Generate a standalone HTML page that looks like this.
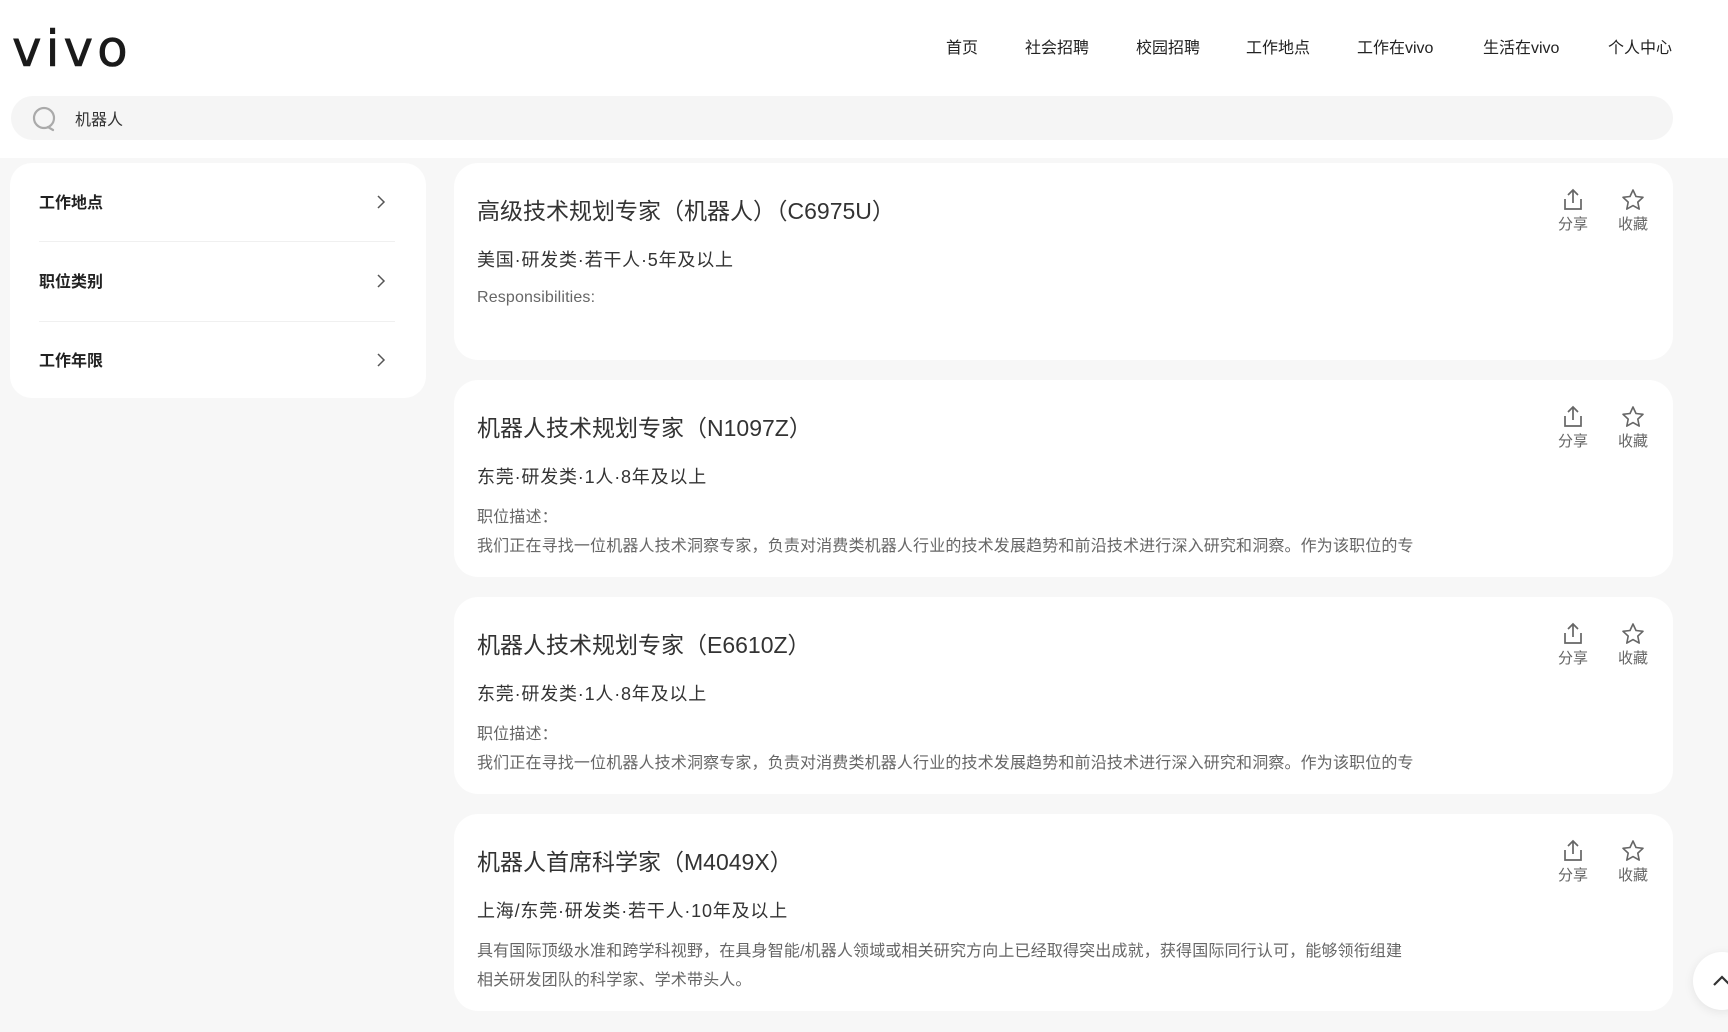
<!DOCTYPE html>
<html><head><meta charset="utf-8"><style>
*{margin:0;padding:0;box-sizing:border-box}
body{width:1728px;height:1032px;overflow:hidden;background:#f7f7f7;font-family:"Liberation Sans","Noto Sans CJK SC",sans-serif;color:#222;position:relative}
.hdr{position:absolute;left:0;top:0;width:1728px;height:158px;background:#fff}
.logo{position:absolute;left:12px;top:20px;font-size:50px;letter-spacing:4px;color:#1a1a1a;font-family:"DejaVu Sans","Liberation Sans",sans-serif;-webkit-text-stroke:0.6px #1a1a1a}
.nav{position:absolute;top:34px;font-size:16px;color:#222}
.search{position:absolute;left:11px;top:96px;width:1662px;height:44px;background:#f5f5f5;border-radius:22px}
.search .t{position:absolute;left:64px;top:10px;font-size:16px;color:#333}
.side{position:absolute;left:10px;top:163px;width:416px;height:235px;background:#fff;border-radius:22px}
.si{position:absolute;left:29px;font-size:16px;font-weight:bold;color:#222}
.hr{position:absolute;left:29px;width:356px;height:1px;background:#f0f0f0}
.chev{position:absolute;left:366px}
.card{position:absolute;left:454px;width:1219px;height:197px;background:#fff;border-radius:24px}
.ti{position:absolute;left:23px;top:29px;font-size:23px;color:#333;white-space:nowrap}
.me{position:absolute;left:23px;top:83px;font-size:18px;letter-spacing:.8px;color:#333;white-space:nowrap}
.d{position:absolute;left:23px;font-size:16px;letter-spacing:.15px;color:#666;white-space:nowrap}
.act{position:absolute;top:25px;width:40px;text-align:center;font-size:15px;color:#666;line-height:20px}
.act svg{display:block;margin:0 auto 3px}
.top{position:absolute;left:1693px;top:952px;width:58px;height:58px;border-radius:50%;background:#fff;box-shadow:0 2px 10px rgba(0,0,0,.08)}
</style></head><body>
<div class="hdr">
<div class="logo">vivo</div>
<div class="nav" style="left:946px">首页</div>
<div class="nav" style="left:1025px">社会招聘</div>
<div class="nav" style="left:1136px">校园招聘</div>
<div class="nav" style="left:1246px">工作地点</div>
<div class="nav" style="left:1357px">工作在vivo</div>
<div class="nav" style="left:1483px">生活在vivo</div>
<div class="nav" style="left:1608px">个人中心</div>
<div class="search">
<svg style="position:absolute;left:21px;top:10px" width="26" height="26" viewBox="0 0 26 26"><circle cx="12" cy="12" r="10" fill="none" stroke="#aaa" stroke-width="2.2"/><path d="M16 21 L21 24" stroke="#aaa" stroke-width="2.2" stroke-linecap="round"/></svg>
<div class="t">机器人</div></div>
</div>
<div class="side">
<div class="si" style="top:26px">工作地点</div>
<div class="hr" style="top:78px"></div>
<div class="si" style="top:105px">职位类别</div>
<div class="hr" style="top:158px"></div>
<div class="si" style="top:184px">工作年限</div>
<svg class="chev" style="top:31px" width="10" height="16" viewBox="0 0 10 16"><path d="M2 2 L8 8 L2 14" fill="none" stroke="#555" stroke-width="1.5"/></svg>
<svg class="chev" style="top:110px" width="10" height="16" viewBox="0 0 10 16"><path d="M2 2 L8 8 L2 14" fill="none" stroke="#555" stroke-width="1.5"/></svg>
<svg class="chev" style="top:189px" width="10" height="16" viewBox="0 0 10 16"><path d="M2 2 L8 8 L2 14" fill="none" stroke="#555" stroke-width="1.5"/></svg>
</div>

<div class="card" style="top:163px">
<div class="ti">高级技术规划专家（机器人）（C6975U）</div>
<div class="me">美国·研发类·若干人·5年及以上</div>
<div class="d" style="top:126px">Responsibilities:</div>
<div class="act" style="left:1099px"><svg width="24" height="24" viewBox="0 0 24 24"><path d="M12 15V2M7 7l5-5 5 5M4 11v10h16V11" fill="none" stroke="#666" stroke-width="1.7"/></svg>分享</div>
<div class="act" style="left:1159px"><svg width="24" height="24" viewBox="0 0 24 24"><path d="M12 2l3 6.5 7 .8-5.2 4.8 1.4 7L12 17.6 5.8 21.1l1.4-7L2 9.3l7-.8z" fill="none" stroke="#666" stroke-width="1.6" stroke-linejoin="round"/></svg>收藏</div>
</div>
<div class="card" style="top:380px">
<div class="ti">机器人技术规划专家（N1097Z）</div>
<div class="me">东莞·研发类·1人·8年及以上</div>
<div class="d" style="top:123px">职位描述：</div>
<div class="d" style="top:152px">我们正在寻找一位机器人技术洞察专家，负责对消费类机器人行业的技术发展趋势和前沿技术进行深入研究和洞察。作为该职位的专</div>
<div class="act" style="left:1099px"><svg width="24" height="24" viewBox="0 0 24 24"><path d="M12 15V2M7 7l5-5 5 5M4 11v10h16V11" fill="none" stroke="#666" stroke-width="1.7"/></svg>分享</div>
<div class="act" style="left:1159px"><svg width="24" height="24" viewBox="0 0 24 24"><path d="M12 2l3 6.5 7 .8-5.2 4.8 1.4 7L12 17.6 5.8 21.1l1.4-7L2 9.3l7-.8z" fill="none" stroke="#666" stroke-width="1.6" stroke-linejoin="round"/></svg>收藏</div>
</div>
<div class="card" style="top:597px">
<div class="ti">机器人技术规划专家（E6610Z）</div>
<div class="me">东莞·研发类·1人·8年及以上</div>
<div class="d" style="top:123px">职位描述：</div>
<div class="d" style="top:152px">我们正在寻找一位机器人技术洞察专家，负责对消费类机器人行业的技术发展趋势和前沿技术进行深入研究和洞察。作为该职位的专</div>
<div class="act" style="left:1099px"><svg width="24" height="24" viewBox="0 0 24 24"><path d="M12 15V2M7 7l5-5 5 5M4 11v10h16V11" fill="none" stroke="#666" stroke-width="1.7"/></svg>分享</div>
<div class="act" style="left:1159px"><svg width="24" height="24" viewBox="0 0 24 24"><path d="M12 2l3 6.5 7 .8-5.2 4.8 1.4 7L12 17.6 5.8 21.1l1.4-7L2 9.3l7-.8z" fill="none" stroke="#666" stroke-width="1.6" stroke-linejoin="round"/></svg>收藏</div>
</div>
<div class="card" style="top:814px">
<div class="ti">机器人首席科学家（M4049X）</div>
<div class="me">上海/东莞·研发类·若干人·10年及以上</div>
<div class="d" style="top:123px">具有国际顶级水准和跨学科视野，在具身智能/机器人领域或相关研究方向上已经取得突出成就，获得国际同行认可，能够领衔组建</div>
<div class="d" style="top:152px">相关研发团队的科学家、学术带头人。</div>
<div class="act" style="left:1099px"><svg width="24" height="24" viewBox="0 0 24 24"><path d="M12 15V2M7 7l5-5 5 5M4 11v10h16V11" fill="none" stroke="#666" stroke-width="1.7"/></svg>分享</div>
<div class="act" style="left:1159px"><svg width="24" height="24" viewBox="0 0 24 24"><path d="M12 2l3 6.5 7 .8-5.2 4.8 1.4 7L12 17.6 5.8 21.1l1.4-7L2 9.3l7-.8z" fill="none" stroke="#666" stroke-width="1.6" stroke-linejoin="round"/></svg>收藏</div>
</div>
<div class="top"><svg style="position:absolute;left:18px;top:22px" width="22" height="14" viewBox="0 0 22 14"><path d="M3 11 L11 3 L19 11" fill="none" stroke="#333" stroke-width="2.2"/></svg></div>
</body></html>
